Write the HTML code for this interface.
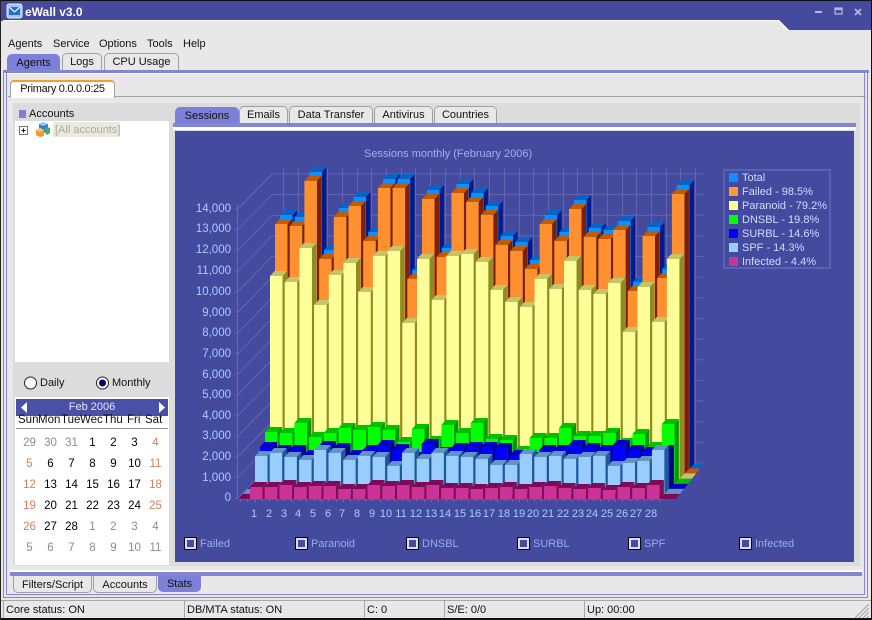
<!DOCTYPE html>
<html><head><meta charset="utf-8"><title>eWall v3.0</title>
<style>
html,body{margin:0;padding:0}
body{width:872px;height:620px;position:relative;overflow:hidden;background:#e8e8e8;font:11px "Liberation Sans",sans-serif;color:#111}
.a{position:absolute}
.t{position:absolute;white-space:nowrap;line-height:14px}
.tab{position:absolute;box-sizing:border-box;background:#e8e8e8;border:1px solid #a0a0a0;border-bottom:0;border-radius:5px 5px 0 0;text-align:center;line-height:17px;white-space:nowrap}
.btab{position:absolute;box-sizing:border-box;background:#e8e8e8;border:1px solid #a0a0a0;border-top:0;border-radius:0 0 5px 5px;text-align:center;line-height:18px;white-space:nowrap}
.tab.act,.btab.act{background:#7c80d8;border-color:#7c80d8}
.cal{position:absolute;left:19px;top:433px;display:grid;grid-template-columns:repeat(7,21px);grid-auto-rows:21px;text-align:center;line-height:21px;font-size:11.5px;color:#000}
.g{color:#8c8c8c}.o{color:#d08060}
.st{position:absolute;top:601px;height:17px;line-height:18px;box-sizing:border-box;border-left:1px solid #a8a8a8;padding-left:2px;font-size:11px;white-space:nowrap}
.cb{position:absolute;top:538px;width:7px;height:7px;background:#444a9e;border:2px solid #dcdcf0;outline:1px solid #000;outline-offset:0}
.cl{position:absolute;top:537px;color:#98aee8;line-height:14px;white-space:nowrap}
.lg{position:absolute;left:729px;width:9px;height:9px}
.lt{position:absolute;left:742px;color:#cfdcff;line-height:14px;white-space:nowrap;font-size:11px}
svg text{font-family:"Liberation Sans",sans-serif}
</style></head><body>

<!-- title bar -->
<svg class="a" style="left:0;top:0" width="872" height="30">
<polygon points="0,0 872,0 872,30 788,30 779,21 0,21" fill="#454a9e"/>
<rect y="0" width="872" height="1" fill="#111"/>
<polygon points="3,20 779,20 789,30 869,30 869,31 788,31 778,21 3,21" fill="#fff"/>
<rect x="7" y="4" width="15" height="14" rx="2" fill="#9fc8f0" stroke="#dfe8f8"/>
<rect x="9" y="7" width="11" height="8" fill="#2a6cc8"/>
<path d="M9 7l5.5 5 5.5-5" fill="none" stroke="#e8f0ff" stroke-width="1.2"/>
<rect x="815" y="11" width="7" height="2" fill="#b4bcdc"/>
<rect x="835" y="8" width="7" height="6" fill="none" stroke="#b4bcdc" stroke-width="1.2"/><rect x="835" y="8" width="7" height="2" fill="#b4bcdc"/>
<path d="M855 9l6 6M861 9l-6 6" stroke="#b4bcdc" stroke-width="1.7"/>
</svg>
<div class="t" style="left:25px;top:5px;color:#fff;font-weight:bold;font-size:12px">eWall v3.0</div>

<!-- menu -->
<div class="t" style="left:8px;top:37px">Agents</div>
<div class="t" style="left:53px;top:37px">Service</div>
<div class="t" style="left:99px;top:37px">Options</div>
<div class="t" style="left:147px;top:37px">Tools</div>
<div class="t" style="left:183px;top:37px">Help</div>

<!-- top tabs -->
<div class="tab act" style="left:7px;top:54px;width:53px;height:17px">Agents</div>
<div class="tab" style="left:62px;top:53px;width:40px;height:17px">Logs</div>
<div class="tab" style="left:104px;top:53px;width:75px;height:17px">CPU Usage</div>
<div class="a" style="left:3px;top:70px;width:866px;height:3px;background:#8486d4"></div>
<div class="a" style="left:3px;top:73px;width:866px;height:1px;background:#fff"></div>

<!-- outer frame -->
<div class="a" style="left:3px;top:73px;width:865px;height:525px;box-sizing:border-box;border:1px solid #8486d4;border-top:0"></div>
<div class="a" style="left:6px;top:73px;width:859px;height:522px;box-sizing:border-box;border:1px solid #8486d4;border-top:0"></div>

<!-- Primary tab page -->
<div class="a" style="left:8px;top:96px;width:858px;height:1px;background:#a0a0a0"></div>
<div class="a" style="left:10px;top:80px;width:105px;height:18px;box-sizing:border-box;background:#fff;border:1px solid #a0a0a0;border-top:2px solid #f0a030;border-bottom:0;border-radius:4px 4px 0 0;text-align:center;line-height:14px;letter-spacing:-.3px">Primary 0.0.0.0:25</div>

<!-- inner gray -->
<div class="a" style="left:13px;top:103px;width:847px;height:463px;background:#dcdcdc"></div>

<!-- left panel -->
<div class="a" style="left:19px;top:110px;width:7px;height:8px;background:#7c80d8"></div>
<div class="t" style="left:29px;top:107px">Accounts</div>
<div class="a" style="left:15px;top:121px;width:154px;height:241px;background:#fff"></div>
<svg class="a" style="left:15px;top:121px" width="50" height="20">
<rect x="4.500" y="5.500" width="8" height="8" fill="#fff" stroke="#777"/>
<path d="M6.500 9.500h4M8.500 7.500v4" stroke="#000"/>
<polygon points="28,1 33,3 33,10 28,12 24,10 24,3" fill="#2f7fd8"/>
<polygon points="28,1 33,3 28,5 24,3" fill="#8fd0f0"/>
<polygon points="32,6 35,7 35,12 32,14 30,12 30,7" fill="#40b050"/>
<polygon points="25,7 29,9 29,15 25,16 21,14 21,9" fill="#f09a28"/>
<polygon points="25,7 29,9 25,11 21,9" fill="#f8c878"/>
</svg>
<div class="a" style="left:53px;top:122px;width:67px;height:15px;background:#ebe8dc"></div>
<div class="t" style="left:55px;top:123px;color:#a8a8a8">[All accounts]</div>

<!-- radios -->
<svg class="a" style="left:15px;top:373px" width="110" height="20">
<circle cx="15.500" cy="10" r="6" fill="#fff" stroke="#222"/>
<circle cx="87.500" cy="10" r="6" fill="#fff" stroke="#222"/>
<circle cx="87.500" cy="10" r="3.500" fill="#000080"/>
</svg>
<div class="t" style="left:40px;top:376px">Daily</div>
<div class="t" style="left:112px;top:376px">Monthly</div>

<!-- calendar -->
<div class="a" style="left:15px;top:397px;width:154px;height:168px;background:#fff"></div>
<div class="a" style="left:16px;top:399px;width:152px;height:17px;background:#4a50a6"></div>
<svg class="a" style="left:16px;top:399px" width="152" height="17">
<polygon points="5,8.500 11,3 11,14" fill="#fff"/>
<polygon points="149,8.500 143,3 143,14" fill="#fff"/>
</svg>
<div class="t" style="left:16px;top:400px;width:152px;text-align:center;color:#dfe4ff">Feb 2006</div>
<div class="t" style="left:18px;top:413px;font-size:11.5px">Sun</div>
<div class="t" style="left:38px;top:413px;font-size:11.5px">Mon</div>
<div class="t" style="left:61px;top:413px;font-size:11.5px">Tue</div>
<div class="t" style="left:80px;top:413px;font-size:11.5px">Wec</div>
<div class="t" style="left:103px;top:413px;font-size:11.5px">Thu</div>
<div class="t" style="left:127px;top:413px;font-size:11.5px">Fri</div>
<div class="t" style="left:145px;top:413px;font-size:11.5px">Sat</div>
<div class="a" style="left:16px;top:428px;width:152px;height:1px;background:#909090"></div>
<div class="cal">
<span class="g">29</span><span class="g">30</span><span class="g">31</span><span>1</span><span>2</span><span>3</span><span class="o">4</span>
<span class="o">5</span><span>6</span><span>7</span><span>8</span><span>9</span><span>10</span><span class="o">11</span>
<span class="o">12</span><span>13</span><span>14</span><span>15</span><span>16</span><span>17</span><span class="o">18</span>
<span class="o">19</span><span>20</span><span>21</span><span>22</span><span>23</span><span>24</span><span class="o">25</span>
<span class="o">26</span><span>27</span><span>28</span><span class="g">1</span><span class="g">2</span><span class="g">3</span><span class="g">4</span>
<span class="g">5</span><span class="g">6</span><span class="g">7</span><span class="g">8</span><span class="g">9</span><span class="g">10</span><span class="g">11</span>
</div>

<!-- right tabs -->
<div class="tab act" style="left:175px;top:107px;width:64px;height:17px">Sessions</div>
<div class="tab" style="left:239px;top:106px;width:49px;height:17px">Emails</div>
<div class="tab" style="left:289px;top:106px;width:84px;height:17px">Data Transfer</div>
<div class="tab" style="left:374px;top:106px;width:59px;height:17px">Antivirus</div>
<div class="tab" style="left:434px;top:106px;width:63px;height:17px">Countries</div>
<div class="a" style="left:173px;top:123px;width:683px;height:4px;background:#8486d4"></div>
<div class="a" style="left:173px;top:127px;width:683px;height:3px;background:#fff"></div>
<div class="a" style="left:175px;top:131px;width:679px;height:431px;background:#444a9e"></div>

<!-- chart -->
<svg id="ch" class="a" style="left:0;top:0" width="872" height="620">
<g id="grid"></g><g id="bars"></g>
<g font-size="11" fill="#a0b4ec"><text x="364" y="157">Sessions monthly (February 2006)</text></g>
<g font-size="11.5" fill="#a8ccff" text-anchor="end">
<text x="231" y="212">14,000</text><text x="231" y="232">13,000</text><text x="231" y="253">12,000</text><text x="231" y="274">11,000</text><text x="231" y="295">10,000</text><text x="231" y="316">9,000</text><text x="231" y="336">8,000</text><text x="231" y="357">7,000</text><text x="231" y="378">6,000</text><text x="231" y="398">5,000</text><text x="231" y="419">4,000</text><text x="231" y="439">3,000</text><text x="231" y="460">2,000</text><text x="231" y="481">1,000</text><text x="231" y="501">0</text>
</g>
<g font-size="11" fill="#a8ccff" text-anchor="middle">
<text x="254" y="517">1</text><text x="269" y="517">2</text><text x="284" y="517">3</text><text x="298" y="517">4</text><text x="313" y="517">5</text><text x="328" y="517">6</text><text x="342" y="517">7</text><text x="357" y="517">8</text><text x="372" y="517">9</text><text x="386" y="517">10</text><text x="401" y="517">11</text><text x="416" y="517">12</text><text x="431" y="517">13</text><text x="445" y="517">14</text><text x="460" y="517">15</text><text x="475" y="517">16</text><text x="489" y="517">17</text><text x="504" y="517">18</text><text x="519" y="517">19</text><text x="533" y="517">20</text><text x="548" y="517">21</text><text x="563" y="517">22</text><text x="578" y="517">23</text><text x="592" y="517">24</text><text x="607" y="517">25</text><text x="622" y="517">26</text><text x="636" y="517">27</text><text x="651" y="517">28</text>
</g>
</svg>

<!-- legend -->
<div class="a" style="left:723px;top:169px;width:108px;height:100px;box-sizing:border-box;border:2px solid #5a60b4"></div>
<div class="lg" style="top:173px;background:#0a90ff"></div><div class="lt" style="top:171px">Total</div>
<div class="lg" style="top:187px;background:#ff9933"></div><div class="lt" style="top:185px">Failed - 98.5%</div>
<div class="lg" style="top:201px;background:#ffff99"></div><div class="lt" style="top:199px">Paranoid - 79.2%</div>
<div class="lg" style="top:215px;background:#00ff00"></div><div class="lt" style="top:213px">DNSBL - 19.8%</div>
<div class="lg" style="top:229px;background:#0000ff"></div><div class="lt" style="top:227px">SURBL - 14.6%</div>
<div class="lg" style="top:243px;background:#99ccff"></div><div class="lt" style="top:241px">SPF - 14.3%</div>
<div class="lg" style="top:257px;background:#cc3399"></div><div class="lt" style="top:255px">Infected - 4.4%</div>

<!-- checkboxes -->
<div class="cb" style="left:185px"></div><div class="cl" style="left:200px">Failed</div>
<div class="cb" style="left:296px"></div><div class="cl" style="left:311px">Paranoid</div>
<div class="cb" style="left:407px"></div><div class="cl" style="left:422px">DNSBL</div>
<div class="cb" style="left:518px"></div><div class="cl" style="left:533px">SURBL</div>
<div class="cb" style="left:629px"></div><div class="cl" style="left:644px">SPF</div>
<div class="cb" style="left:740px"></div><div class="cl" style="left:755px">Infected</div>

<!-- bottom tabs -->
<div class="a" style="left:10px;top:570px;width:852px;height:2px;background:#fff"></div>
<div class="a" style="left:10px;top:572px;width:852px;height:4px;background:#8486d4"></div>
<div class="btab" style="left:13px;top:576px;width:79px;height:17px">Filters/Script</div>
<div class="btab" style="left:93px;top:576px;width:64px;height:17px">Accounts</div>
<div class="btab act" style="left:158px;top:576px;width:43px;height:16px;line-height:16px">Stats</div>

<!-- status bar -->
<div class="a" style="left:0;top:600px;width:872px;height:1px;background:#a8a8a8"></div>
<div class="st" style="left:3px;width:180px">Core status: ON</div>
<div class="st" style="left:184px;width:179px">DB/MTA status: ON</div>
<div class="st" style="left:364px;width:79px">C: 0</div>
<div class="st" style="left:444px;width:139px">S/E: 0/0</div>
<div class="st" style="left:584px;width:200px">Up: 00:00</div>
<svg class="a" style="left:855px;top:603px" width="14" height="15">
<path d="M0 15L14 1M4 15L14 5M8 15L14 9M12 15L14 13" stroke="#a0a0a0" fill="none"/>
</svg>

<!-- window edges -->
<div class="a" style="left:0;top:618px;width:872px;height:2px;background:#111"></div>
<div class="a" style="left:0;top:0;width:1px;height:620px;background:#222"></div>
<div class="a" style="left:871px;top:0;width:1px;height:620px;background:#111"></div>

<script>
(function(){
var grid='',b='';
var c='#6266b2';
for(var k=0;k<=14;k++){var y=463-20.65*k;
 grid+='<path d="M272 '+y+'H703" stroke="'+c+'" fill="none"/>';
 var fy=y+35;
 grid+='<path d="M238 '+fy+'L272 '+y+'" stroke="'+c+'" fill="none"/>';
}
for(var k=0;k<=28;k++){var x=Math.round(283+14.72*k)+.5;
 grid+='<path d="M'+x+' 168V463" stroke="'+c+'" fill="none"/>';
}
grid+='<path d="M237.500 204V499M238 499H664" stroke="#6468b8" fill="none"/>';
for(var k=0;k<=14;k++){var y=Math.round(498-20.65*k);grid+='<path d="M235 '+y+'H238" stroke="#6468b8"/>';}
for(var k=0;k<58;k++){var x=Math.round(240+7.35*k)+.5;grid+='<path d="M'+x+' 499V502" stroke="#6468b8"/>';}
document.getElementById('grid').innerHTML=grid;

var S=[
 {x:280,base:469,f:'#0a90ff',t:'#0a62c4',s:'#001a8c',v:null},
 {x:275,base:474,f:'#ff9030',t:'#c05c08',s:'#7e2000',v:[224,226,181,259,217,206,241,188,188,279,199,257,193,202,215,245,251,269,224,241,209,237,239,230,291,236,278,194]},
 {x:270,base:479,f:'#ffff99',t:'#c4c468',s:'#8c8c22',v:[276,282,248,305,275,263,292,256,251,323,259,300,256,254,262,290,302,307,279,289,261,290,294,283,332,287,322,259]},
 {x:265,base:484,f:'#00ff00',t:'#00c000',s:'#009a00',v:[432,433,423,437,433,428,430,427,430,442,429,441,425,433,423,439,440,451,438,438,428,436,436,433,443,434,447,424]},
 {x:260,base:489,f:'#0000ff',t:'#0000c4',s:'#000088',v:[447,450,450,455,446,448,455,450,445,449,457,444,452,448,447,447,448,455,457,450,450,445,448,450,445,450,452,450]},
 {x:255,base:494,f:'#99ccff',t:'#6494c4',s:'#1e5a94',v:[456,453,457,460,450,453,460,456,457,466,453,459,453,456,457,459,465,465,454,457,456,459,457,456,466,463,461,450]},
 {x:250,base:499,f:'#cc3399',t:'#7e0a55',s:'#7e0f52',v:[487,487,485,487,486,486,489,489,485,486,485,487,485,488,488,489,488,487,489,487,486,488,489,488,490,487,488,485]}
];
S[0].v=S[1].v.map(function(y){return y-9});
var w=12.5,d=4.5,dy=5;
for(var s=6;s>=0;s--){var q=S[s];
 var sh=6-s,y1=499-5.1*sh,y2=y1-5.1;
 b+='<polygon points="'+(238+4.9*sh)+','+y1+' '+(676+4*sh)+','+y1+' '+(680+4*sh)+','+y2+' '+(242.9+4.9*sh)+','+y2+'" fill="'+q.t+'"/>';
}
S.forEach(function(q){
 for(var i=0;i<28;i++){
  var x=+(q.x+14.7*i).toFixed(1),t=q.v[i],e=q.base;
  b+='<polygon points="'+(x+w)+','+t+' '+(x+w+d)+','+(t-dy)+' '+(x+w+d)+','+(e-dy)+' '+(x+w)+','+e+'" fill="'+q.s+'"/>';
  b+='<polygon points="'+x+','+t+' '+(x+w)+','+t+' '+(x+w+d)+','+(t-dy)+' '+(x+d)+','+(t-dy)+'" fill="'+q.t+'"/>';
  b+='<rect x="'+x+'" y="'+t+'" width="'+w+'" height="'+(e-t)+'" fill="'+q.f+'"/>';
 }
});
document.getElementById('bars').innerHTML=b;
})();
</script>
</body></html>
